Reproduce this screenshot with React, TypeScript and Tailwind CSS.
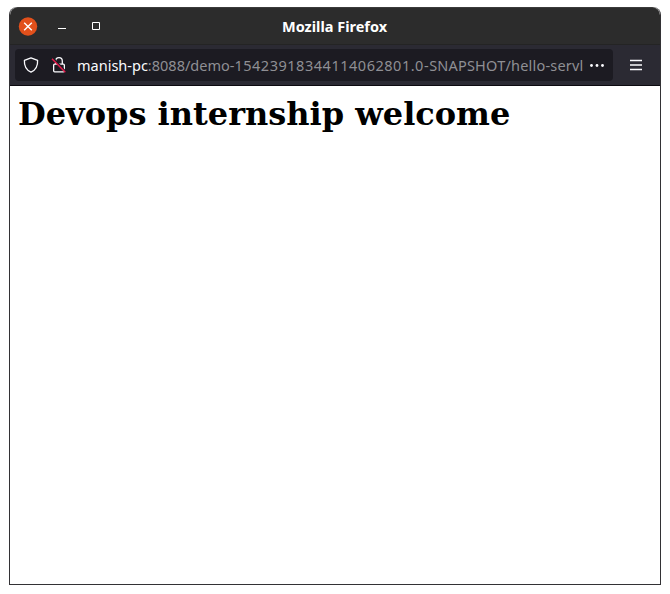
function TitleBar() {
  return (
    <header className="flex h-[38px] shrink-0 items-center rounded-t-[8px] border-t border-[#3b3b3b] border-b border-b-[#242424] bg-[#2c2c2c] pb-px pl-[8px] text-white">
      <button aria-label="Close" className="h-5 w-5">
        <svg width="20" height="20" viewBox="0 0 20 20">
          <circle cx="10" cy="10.5" r="9.2" fill="#e2501b" />
          <path d="M6.2 6.700l7.6 7.6M13.8 6.700l-7.6 7.6" stroke="#fff" strokeWidth="1.4" />
        </svg>
      </button>
      <button aria-label="Minimize" className="ml-[20px] h-4 w-2">
        <svg width="8" height="16" viewBox="0 0 8 16">
          <path d="M0 10.5h8" stroke="#fff" />
        </svg>
      </button>
      <button aria-label="Maximize" className="ml-[26px] h-4 w-2">
        <svg width="8" height="16" viewBox="0 0 8 16">
          <path d="M.5 4.5h7v7h-7z" fill="none" stroke="#fff" />
        </svg>
      </button>
      <h2 className="ml-[182px] whitespace-nowrap font-['Noto_Sans',sans-serif] text-[14.5px] leading-5 font-bold">
        Mozilla Firefox
      </h2>
    </header>
  );
}

function AddressBar() {
  return (
    <div className="flex h-[41px] shrink-0 items-center border-b border-[#0c0a10] bg-[#2b2a33] pl-[5px]">
      <div className="flex h-8 w-[598px] items-center rounded-[4px] bg-[#1c1b22] pl-2">
        <svg width="16" height="16" viewBox="0 0 16 16" fill="none" stroke="#fbfbfe" strokeWidth="1.3" strokeLinejoin="round">
          <path d="M8 .8l6.6 2.6c.3 5-1.7 9.6-6.6 11.8C3.100 13 1.100 8.400 1.400 3.400z" />
        </svg>
        <svg className="ml-3" width="16" height="16" viewBox="0 0 16 16" fill="none">
          <path d="M4.700 7V4a3.300 3.300 0 0 1 6.600 0v3" stroke="#fbfbfe" strokeWidth="1.3" />
          <rect x="2.650" y="7.150" width="10.700" height="7.700" rx="1" stroke="#fbfbfe" strokeWidth="1.3" />
          <path d="M2 1.200l13 14" stroke="#1c1b22" strokeWidth="2" />
          <path d="M1 1.800l13.300 13.400" stroke="#e31b4c" strokeWidth="1.500" />
        </svg>
        <div className="ml-[10px] flex w-[508px] overflow-hidden font-['Noto_Sans',sans-serif] text-[14.5px] leading-6 whitespace-nowrap">
          <span className="text-[#fbfbfe]">manish-pc</span>
          <span className="text-[#8f8f94]">
            :8088/demo-<span className="tracking-[0.52px]">15423918344114062801.0-</span>
            <span className="tracking-[0.2px]">SNAPSHOT/hello-servl</span>
          </span>
        </div>
        <svg className="ml-[4px] shrink-0" width="16" height="16" viewBox="0 0 16 16" fill="#fbfbfe">
          <circle cx="2.500" cy="8.500" r="1.400" />
          <circle cx="8" cy="8.500" r="1.400" />
          <circle cx="13.500" cy="8.500" r="1.400" />
        </svg>
      </div>
      <button aria-label="Menu" className="ml-[17px] h-4 w-3">
        <svg width="12" height="16" viewBox="0 0 12 16">
          <path d="M0 3.500h12M0 8h12M0 12.500h12" stroke="#fbfbfe" strokeWidth="1.4" />
        </svg>
      </button>
    </div>
  );
}

export default function App() {
  return (
    <div className="flex h-[594px] w-[670px] bg-white pt-[7px] pl-[9px]">
      <div className="flex h-[578px] w-[652px] flex-col overflow-hidden rounded-t-[8px] border-x border-b border-[#333235]">
        <TitleBar />
        <AddressBar />
        <main className="flex-1 bg-white px-2 pt-[9px]">
          <h1 className="whitespace-nowrap font-['DejaVu_Serif',serif] text-[32px] leading-[38px] font-bold text-black">
            Devops internship welcome
          </h1>
        </main>
      </div>
    </div>
  );
}
